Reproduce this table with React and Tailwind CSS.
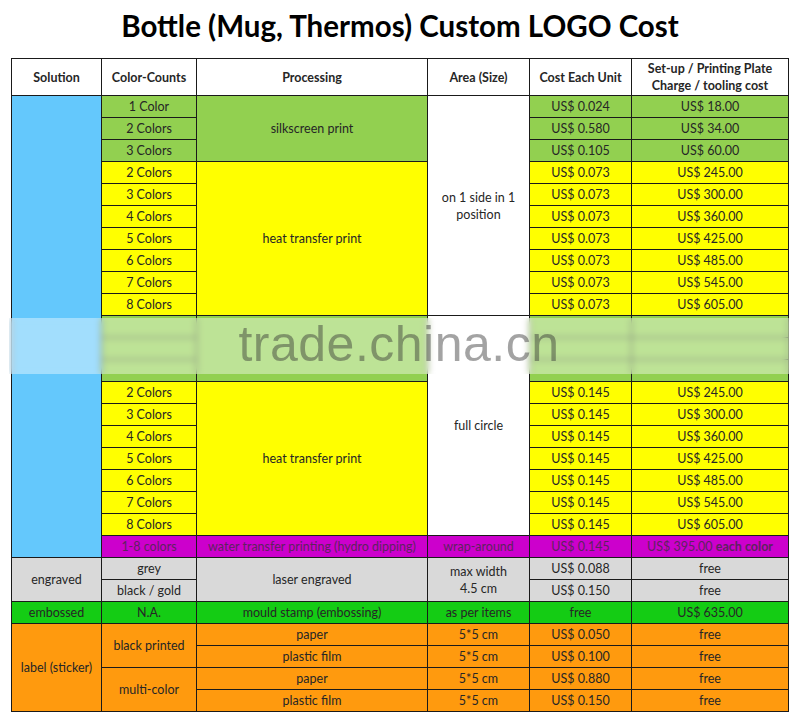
const BLUE = "bg-[#64c8fc]";
const GREEN = "bg-[#92d050]";
const YELLOW = "bg-[#ffff00]";
const WHITE = "bg-white";
const PURPLE = "bg-[#cc00cc] text-[#5e225e]";
const GREY = "bg-[#d9d9d9]";
const LIME = "bg-[#14cc14]";
const ORANGE = "bg-[#ff9a0e]";

// cells in row-major order; spans handled by grid auto-placement
const cells = [
  // header
  { t: "Solution", c: "bg-white font-bold" },
  { t: "Color-Counts", c: "bg-white font-bold" },
  { t: "Processing", c: "bg-white font-bold" },
  { t: "Area (Size)", c: "bg-white font-bold" },
  { t: "Cost Each Unit", c: "bg-white font-bold" },
  { t: "Set-up / Printing Plate\nCharge / tooling cost", c: "bg-white font-bold" },

  // silkscreen
  { t: "", c: `${BLUE} row-span-21` },
  { t: "1 Color", c: GREEN },
  { t: "silkscreen print", c: `${GREEN} row-span-3` },
  { t: "on 1 side in 1\nposition", c: `${WHITE} row-span-10` },
  { t: "US$ 0.024", c: GREEN },
  { t: "US$ 18.00", c: GREEN },
  { t: "2 Colors", c: GREEN },
  { t: "US$ 0.580", c: GREEN },
  { t: "US$ 34.00", c: GREEN },
  { t: "3 Colors", c: GREEN },
  { t: "US$ 0.105", c: GREEN },
  { t: "US$ 60.00", c: GREEN },

  // heat transfer, one position
  { t: "2 Colors", c: YELLOW },
  { t: "heat transfer print", c: `${YELLOW} row-span-7` },
  { t: "US$ 0.073", c: YELLOW },
  { t: "US$ 245.00", c: YELLOW },
  ...[
    ["3 Colors", "US$ 300.00"],
    ["4 Colors", "US$ 360.00"],
    ["5 Colors", "US$ 425.00"],
    ["6 Colors", "US$ 485.00"],
    ["7 Colors", "US$ 545.00"],
    ["8 Colors", "US$ 605.00"],
  ].flatMap(([a, b]) => [
    { t: a, c: YELLOW },
    { t: "US$ 0.073", c: YELLOW },
    { t: b, c: YELLOW },
  ]),

  // rows under the watermark
  { t: "", c: GREEN },
  { t: "", c: `${GREEN} row-span-3` },
  { t: "full circle", c: `${WHITE} row-span-10` },
  { t: "", c: GREEN },
  { t: "", c: GREEN },
  { t: "", c: GREEN },
  { t: "", c: GREEN },
  { t: "", c: GREEN },
  { t: "", c: GREEN },
  { t: "", c: GREEN },
  { t: "", c: GREEN },

  // heat transfer, full circle
  { t: "2 Colors", c: YELLOW },
  { t: "heat transfer print", c: `${YELLOW} row-span-7` },
  { t: "US$ 0.145", c: YELLOW },
  { t: "US$ 245.00", c: YELLOW },
  ...[
    ["3 Colors", "US$ 300.00"],
    ["4 Colors", "US$ 360.00"],
    ["5 Colors", "US$ 425.00"],
    ["6 Colors", "US$ 485.00"],
    ["7 Colors", "US$ 545.00"],
    ["8 Colors", "US$ 605.00"],
  ].flatMap(([a, b]) => [
    { t: a, c: YELLOW },
    { t: "US$ 0.145", c: YELLOW },
    { t: b, c: YELLOW },
  ]),

  // hydro dipping
  { t: "1-8 colors", c: PURPLE },
  { t: "water transfer printing (hydro dipping)", c: PURPLE },
  { t: "wrap-around", c: PURPLE },
  { t: "US$ 0.145", c: PURPLE },
  { t: "each", c: PURPLE, each: true },

  // engraved
  { t: "engraved", c: `${GREY} row-span-2` },
  { t: "grey", c: GREY },
  { t: "laser engraved", c: `${GREY} row-span-2` },
  { t: "max width\n4.5 cm", c: `${GREY} row-span-2` },
  { t: "US$ 0.088", c: GREY },
  { t: "free", c: GREY },
  { t: "black / gold", c: GREY },
  { t: "US$ 0.150", c: GREY },
  { t: "free", c: GREY },

  // embossed
  { t: "embossed", c: LIME },
  { t: "N.A.", c: LIME },
  { t: "mould stamp (embossing)", c: LIME },
  { t: "as per items", c: LIME },
  { t: "free", c: LIME },
  { t: "US$ 635.00", c: LIME },

  // label
  { t: "label (sticker)", c: `${ORANGE} row-span-4` },
  { t: "black printed", c: `${ORANGE} row-span-2` },
  { t: "paper", c: ORANGE },
  { t: "5*5 cm", c: ORANGE },
  { t: "US$ 0.050", c: ORANGE },
  { t: "free", c: ORANGE },
  { t: "plastic film", c: ORANGE },
  { t: "5*5 cm", c: ORANGE },
  { t: "US$ 0.100", c: ORANGE },
  { t: "free", c: ORANGE },
  { t: "multi-color", c: `${ORANGE} row-span-2` },
  { t: "paper", c: ORANGE },
  { t: "5*5 cm", c: ORANGE },
  { t: "US$ 0.880", c: ORANGE },
  { t: "free", c: ORANGE },
  { t: "plastic film", c: ORANGE },
  { t: "5*5 cm", c: ORANGE },
  { t: "US$ 0.150", c: ORANGE },
  { t: "free", c: ORANGE },
];

export default function App() {
  return (
    <div className="w-[800px] h-[727px] bg-white text-[#262626] font-['Lato','Liberation_Sans',sans-serif] overflow-hidden">
      <h1 className="h-[58px] pt-[8px] text-center text-[29.5px] leading-[36px] font-bold text-black">
        Bottle (Mug, Thermos) Custom LOGO Cost
      </h1>

      <div className="relative ml-[11px] w-[778px]">
        <div className="grid grid-cols-[89px_94px_230px_101px_101px_156px] grid-rows-[36px_repeat(28,21px)] gap-px p-px bg-[#1a1a1a] text-[12.5px] leading-[17px]">
          {cells.map((cell, i) => (
            <div
              key={i}
              className={`${cell.c} flex items-center justify-center text-center whitespace-pre-line`}
            >
              {cell.each ? (
                <span>
                  US$ 395.00 <b>each color</b>
                </span>
              ) : (
                cell.t
              )}
            </div>
          ))}
        </div>

        {/* trade.china.cn watermark band */}
        <div className="absolute -left-[2px] right-0 top-[260px] h-[56px] bg-white/40 backdrop-blur-[3px] flex items-center justify-center">
          <span className="font-['Liberation_Sans',Arial,sans-serif] text-[50px] leading-none text-[#333333]/45 tracking-[0.5px] pb-[4px]">
            trade.china.cn
          </span>
        </div>
      </div>
    </div>
  );
}
